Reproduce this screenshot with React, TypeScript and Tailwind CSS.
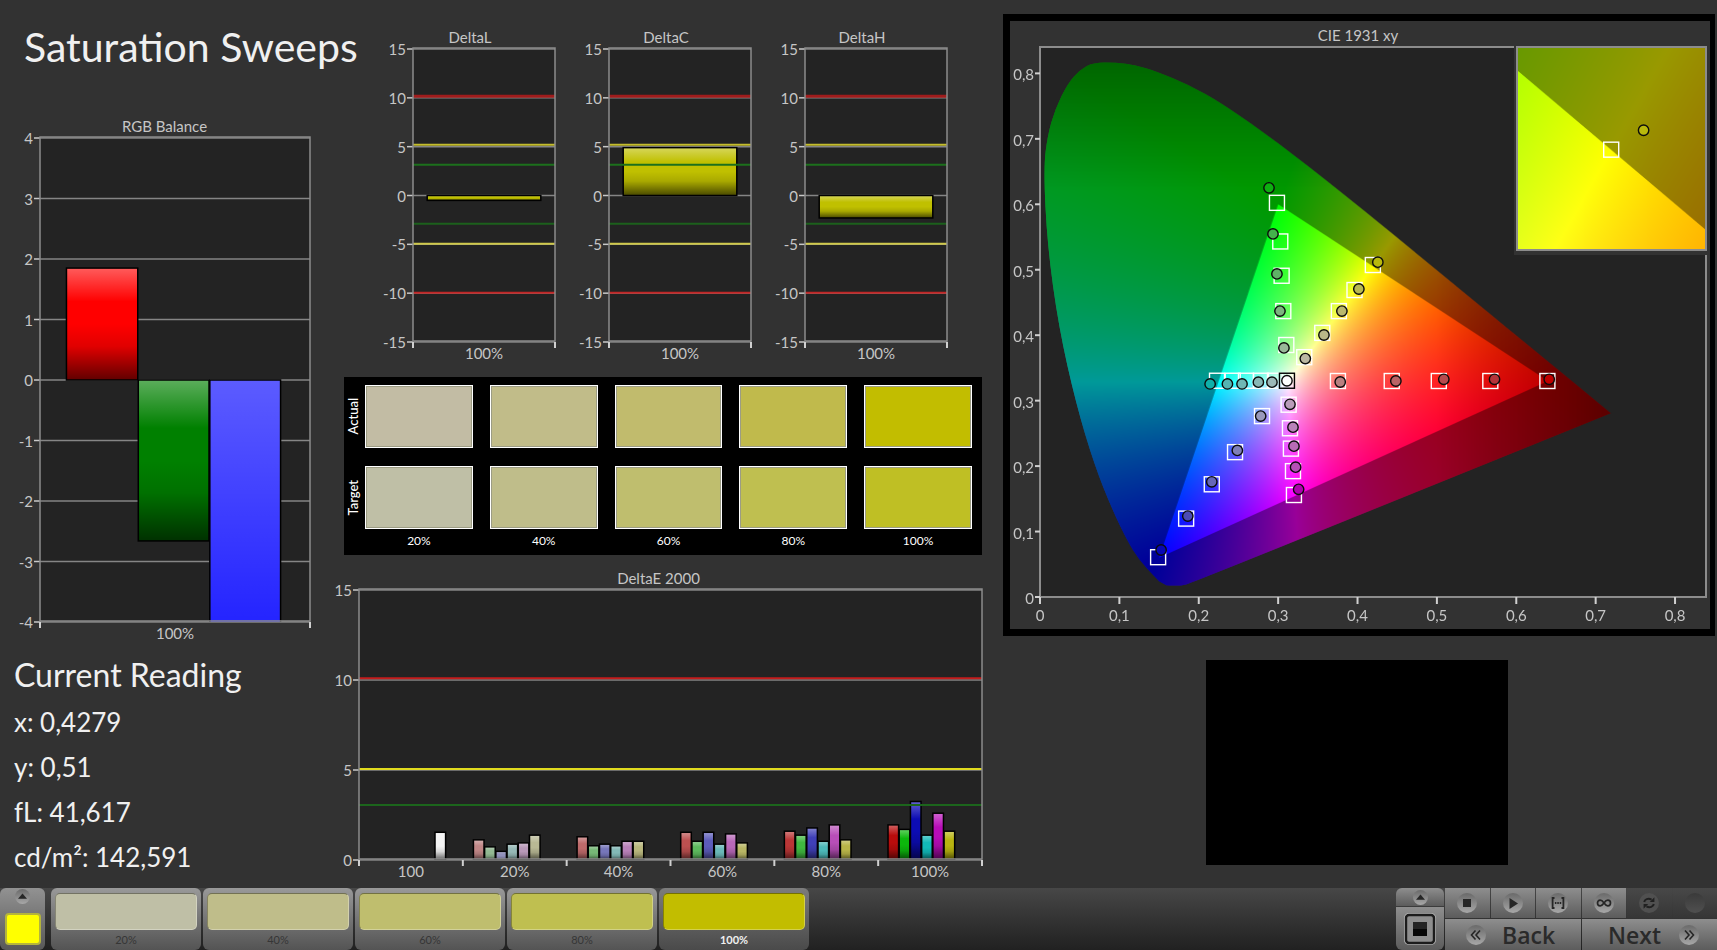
import { useEffect, useRef } from 'react';
import type { ReactNode } from 'react';

type Point = [number, number];
type Domain = { x0: number; x1: number; y0: number; y1: number };
type Bar = { left: number; width: number; value: number; color: string };
type Limit = { value: number; color: string; width: number };

const CIE_DOMAIN: Domain = { x0: 0, x1: 0.839, y0: 0, y1: 0.8403 };
const ZOOM_DOMAIN: Domain = { x0: 0.3937, x1: 0.4451, y0: 0.4797, y1: 0.5315 };

const LOCUS: Point[] = [
  [0.155, 0.0185], [0.145, 0.03], [0.1241, 0.0578], [0.1096, 0.0868], [0.0913, 0.1327],
  [0.0687, 0.2007], [0.0454, 0.295], [0.0235, 0.4127], [0.0092, 0.5384], [0.0045, 0.6548],
  [0.0095, 0.705], [0.0189, 0.745], [0.035, 0.785], [0.05, 0.805], [0.067, 0.8165],
  [0.096, 0.8165], [0.12, 0.813], [0.1468, 0.803], [0.1867, 0.783], [0.2296, 0.7543],
  [0.3016, 0.6923], [0.3731, 0.6245], [0.4441, 0.5547], [0.5125, 0.4866], [0.5752, 0.4242],
  [0.627, 0.3725], [0.6658, 0.334], [0.6915, 0.3083], [0.719, 0.2809], [0.19, 0.021],
  [0.178, 0.0175], [0.163, 0.0173],
];

const GAMUT: Point[] = [[0.64, 0.33], [0.3, 0.6], [0.15, 0.06]];

const TARGETS: Point[] = [
  [0.2985, 0.6022], [0.3027, 0.5432], [0.3044, 0.4908], [0.3065, 0.4368], [0.3103, 0.385],
  [0.4193, 0.5072], [0.3962, 0.469], [0.3765, 0.4368], [0.3556, 0.4035], [0.3329, 0.3664],
  [0.223, 0.3304], [0.2428, 0.3304], [0.2595, 0.3304], [0.2784, 0.3304], [0.296, 0.3304],
  [0.2797, 0.2764], [0.2457, 0.2213], [0.2164, 0.1722], [0.1841, 0.1198], [0.1488, 0.0608],
  [0.3132, 0.2938], [0.3149, 0.2578], [0.3161, 0.2267], [0.3187, 0.1923], [0.3199, 0.1558],
  [0.3753, 0.33], [0.4431, 0.33], [0.5024, 0.33], [0.5673, 0.33], [0.6392, 0.33],
];

const READINGS: [number, number, string][] = [
  [0.2885, 0.6251, '#0db010'], [0.2935, 0.5547, '#44b24c'], [0.2985, 0.4936, '#5fb266'],
  [0.3023, 0.4368, '#7cb47f'], [0.3073, 0.3806, '#99b999'], [0.4256, 0.5116, '#b9b90c'],
  [0.4017, 0.4706, '#b9b950'], [0.3803, 0.4368, '#bab86d'], [0.3577, 0.4003, '#bab788'],
  [0.3342, 0.3642, '#bbb8a2'], [0.2922, 0.3282, '#9cb8b8'], [0.2751, 0.3282, '#88b8b6'],
  [0.2545, 0.3255, '#6fb8b6'], [0.2361, 0.3255, '#55b5b3'], [0.2143, 0.3255, '#10b0aa'],
  [0.278, 0.2764, '#9999bb'], [0.2486, 0.224, '#7f7fb9'], [0.2164, 0.176, '#6666b8'],
  [0.1862, 0.1236, '#4b4bb5'], [0.1526, 0.0718, '#0808b4'], [0.3149, 0.2944, '#b99cb9'],
  [0.3187, 0.2595, '#b983b9'], [0.3199, 0.2305, '#b86bb6'], [0.322, 0.1984, '#b64fb6'],
  [0.3258, 0.1645, '#b000b0'], [0.3782, 0.3285, '#b98080'], [0.4483, 0.33, '#b96466'],
  [0.5087, 0.3326, '#b64b4e'], [0.5726, 0.3326, '#b4343a'], [0.6415, 0.3326, '#c00000'],
];

const SWATCHES = [
  { label: '20%', actual: '#c2bca4', target: '#bfbfa6' },
  { label: '40%', actual: '#c1bc89', target: '#bfbd8a' },
  { label: '60%', actual: '#c1bb6d', target: '#bfbe6e' },
  { label: '80%', actual: '#c0ba4c', target: '#bfbf50' },
  { label: '100%', actual: '#c2bd00', target: '#bfbf24' },
];

const DELTA_LIMITS: Limit[] = [
  { value: 10.15, color: '#a01c1c', width: 3 },
  { value: 5.2, color: '#c4bd2e', width: 2 },
  { value: 3.15, color: '#1c701c', width: 2 },
  { value: -2.9, color: '#1c601c', width: 2 },
  { value: -4.95, color: '#cfc84a', width: 2 },
  { value: -9.95, color: '#c02626', width: 2 },
];

const DELTA_E_LIMITS: Limit[] = [
  { value: 10.1, color: '#c41c1c', width: 2 },
  { value: 5.05, color: '#e0da1e', width: 2 },
  { value: 3.05, color: '#1c651c', width: 2 },
];

const SWEEPS = [
  { values: [1.12, 0.73, 0.48, 0.88, 0.95, 1.38], colors: ['#c08686', '#92b892', '#9090ba', '#96b8b6', '#b898b8', '#b8b894'] },
  { values: [1.29, 0.79, 0.88, 0.79, 1.04, 1.04], colors: ['#be6a6a', '#76b876', '#7676ba', '#82b8b6', '#b880b8', '#b8b67c'] },
  { values: [1.54, 1.04, 1.54, 0.88, 1.45, 0.95], colors: ['#bc5050', '#5cb85c', '#5c5cba', '#6ab8b8', '#b868b8', '#b8b664'] },
  { values: [1.6, 1.38, 1.78, 1.04, 1.95, 1.12], colors: ['#ba3636', '#40b840', '#4040b8', '#4cb8b8', '#b84eb8', '#b8b448'] },
  { values: [1.95, 1.7, 3.25, 1.38, 2.6, 1.6], colors: ['#b80c0c', '#0cb80c', '#0c0cb4', '#12b8b8', '#b80cb8', '#b8b410'] },
];

const DELTA_E_BARS: Bar[] = [
  { left: 12.2, width: 1.7, value: 1.54, color: '#f4f4f4' },
  ...SWEEPS.flatMap((s, i) =>
    s.values.map((value, j) => ({
      left: ((i + 1) * 100) / 6 + 1.7 - i * 0.03 + j * 1.8,
      width: 1.7,
      value,
      color: s.colors[j],
    })),
  ),
];

const pct = (n: number) => `${n}%`;

function mix([x, y]: Point): [number, number, number] {
  const z = 1 - x - y;
  const r = Math.max(0, 3.2406 * x - 1.5372 * y - 0.4986 * z);
  const g = Math.max(0, -0.9689 * x + 1.8758 * y + 0.0415 * z);
  const b = Math.max(0, 0.0557 * x - 0.204 * y + 1.057 * z);
  // the far red and far green ends of the locus fade out
  const fade = Math.min(1, 1 - (x - 0.5) * 1.85, 1 - (y - 0.62) * 1.7);
  const k = (255 * fade) / Math.max(r, g, b);
  return [r * k, g * k, b * k];
}

function Chromaticity({ domain, width, height }: { domain: Domain; width: number; height: number }) {
  const ref = useRef<HTMLCanvasElement>(null);

  useEffect(() => {
    const ctx = ref.current?.getContext('2d');
    if (!ctx) return;
    const { x0, x1, y0, y1 } = domain;
    const source = document.createElement('canvas');
    source.width = width;
    source.height = height;
    const sctx = source.getContext('2d')!;
    const image = sctx.createImageData(width, height);
    for (let py = 0; py < height; py++) {
      for (let px = 0; px < width; px++) {
        const rgb = mix([x0 + ((px + 0.5) / width) * (x1 - x0), y1 - ((py + 0.5) / height) * (y1 - y0)]);
        image.data.set([...rgb, 255], (py * width + px) * 4);
      }
    }
    sctx.putImageData(image, 0, 0);

    const toPx = ([x, y]: Point): Point => [((x - x0) / (x1 - x0)) * width, ((y1 - y) / (y1 - y0)) * height];
    const polygon = (points: Point[]) => {
      const path = new Path2D();
      points.forEach((p) => path.lineTo(...toPx(p)));
      path.closePath();
      return path;
    };

    // round off the locus by running curves through the segment midpoints
    const locus = new Path2D();
    LOCUS.forEach((p, i) => {
      const next = LOCUS[(i + 1) % LOCUS.length];
      const isTip = p[0] > 0.7;
      const [cx, cy] = toPx(p);
      const [mx, my] = toPx([(p[0] + next[0]) / 2, (p[1] + next[1]) / 2]);
      if (i === 0) locus.moveTo(mx, my);
      else if (isTip) {
        locus.lineTo(cx, cy);
        locus.lineTo(mx, my);
      } else locus.quadraticCurveTo(cx, cy, mx, my);
    });
    locus.closePath();

    ctx.clearRect(0, 0, width, height);
    ctx.save();
    ctx.clip(locus);
    ctx.drawImage(source, 0, 0);
    const shade = new Path2D();
    shade.rect(0, 0, width, height);
    shade.addPath(polygon(GAMUT));
    ctx.fillStyle = 'rgba(0,0,0,0.4)';
    ctx.fill(shade, 'evenodd');
    ctx.restore();
  }, [domain, width, height]);

  return <canvas ref={ref} width={width} height={height} className="block h-full w-full" />;
}

function Marker({ at, domain, children }: { at: Point; domain: Domain; children: ReactNode }) {
  const x = ((at[0] - domain.x0) / (domain.x1 - domain.x0)) * 100;
  const y = ((domain.y1 - at[1]) / (domain.y1 - domain.y0)) * 100;
  return (
    <svg x={pct(x)} y={pct(y)} overflow="visible">
      {children}
    </svg>
  );
}

function Target({ color = '#fff' }: { color?: string }) {
  return <rect x="-7.5" y="-7.5" width="15" height="15" fill="none" stroke={color} strokeWidth="1.4" />;
}

function Reading({ color }: { color: string }) {
  return <circle r="5.2" fill={color} stroke="#0c0c0c" strokeWidth="1.4" />;
}

type ChartProps = {
  title: string;
  ticks: number[];
  bars: Bar[];
  limits?: Limit[];
  categories: string[];
  gutter: string;
};

function BarChart({ title, ticks, bars, limits = [], categories, gutter }: ChartProps) {
  const max = ticks[0];
  const min = ticks[ticks.length - 1];
  const at = (v: number) => ((max - v) / (max - min)) * 100;

  return (
    <figure className="flex h-full min-w-0 flex-1 flex-col">
      <figcaption className="h-5 text-center text-[15px] leading-5 text-[#c6c6c6]">{title}</figcaption>
      <div className={`min-h-0 flex-1 pb-7 ${gutter}`}>
        <svg width="100%" height="100%" className="overflow-visible">
          <rect width="100%" height="100%" fill="#232323" />
          {ticks.map((t) => (
            <g key={t}>
              <line x1="0" x2="100%" y1={pct(at(t))} y2={pct(at(t))} stroke="#858585" strokeWidth="1.5" />
              <line x1="-6" x2="0" y1={pct(at(t))} y2={pct(at(t))} stroke="#c8c8c8" strokeWidth="1.5" />
              <text x="-7" y={pct(at(t))} dy="6" textAnchor="end" fontSize="15" fill="#c6c6c6">
                {t}
              </text>
            </g>
          ))}
          <svg width="100%" height="100%">
            {bars.map((b) => {
              const top = at(Math.max(b.value, 0));
              const box = {
                x: pct(b.left),
                y: pct(top),
                width: pct(b.width),
                height: pct(at(Math.min(b.value, 0)) - top),
              };
              return (
                <g key={b.left}>
                  <rect {...box} fill={b.color} />
                  <rect {...box} fill="url(#gloss)" stroke="#000" strokeWidth="1.5" />
                </g>
              );
            })}
          </svg>
          {limits.map((l) => (
            <line
              key={l.value}
              x1="0"
              x2="100%"
              y1={pct(at(l.value))}
              y2={pct(at(l.value))}
              stroke={l.color}
              strokeWidth={l.width}
            />
          ))}
          <rect y="-1" width="100%" height="100%" fill="none" stroke="#8c8c8c" strokeWidth="1.5" />
          {[...categories, ''].map((c, i) => {
            const x = (i / categories.length) * 100;
            return (
              <g key={i}>
                <svg x={pct(x)} y="100%" overflow="visible">
                  <line y2="6" stroke="#d0d0d0" strokeWidth="2" />
                </svg>
                <text x={pct(x + 50 / categories.length)} y="100%" dy="17" textAnchor="middle" fontSize="15" fill="#c6c6c6">
                  {c}
                </text>
              </g>
            );
          })}
        </svg>
      </div>
    </figure>
  );
}

function CieChart() {
  const steps = [0, 1, 2, 3, 4, 5, 6, 7, 8];
  const label = (n: number) => (n ? `0,${n}` : '0');
  return (
    <figure className="flex min-h-0 flex-1 flex-col border-[7px] border-r-[5px] border-black pt-1 pr-1 pb-8 pl-[30px]">
      <figcaption className="mb-[2px] -ml-[30px] h-5 text-center text-[15px] leading-5 text-[#c6c6c6]">
        CIE 1931 xy
      </figcaption>
      <div className="relative min-h-0 flex-1 bg-[#232323]">
        <div className="absolute inset-0">
          <Chromaticity domain={CIE_DOMAIN} width={667} height={550} />
        </div>
        <svg width="100%" height="100%" className="absolute inset-0 overflow-visible">
          <rect width="100%" height="100%" fill="none" stroke="#8c8c8c" strokeWidth="2" />
          {steps.map((n) => {
            const x = pct((n * 10) / CIE_DOMAIN.x1);
            const y = pct(100 - (n * 10) / CIE_DOMAIN.y1);
            return (
              <g key={n} stroke="#d0d0d0" strokeWidth="2">
                <svg x={x} y="100%" overflow="visible">
                  <line y2="7" />
                </svg>
                <line x1="-5" x2="0" y1={y} y2={y} />
                <text x={x} y="100%" dy="24" textAnchor="middle" fontSize="15" fill="#c6c6c6" stroke="none">
                  {label(n)}
                </text>
                <text x="-6" y={y} dy="7" textAnchor="end" fontSize="15" fill="#c6c6c6" stroke="none">
                  {label(n)}
                </text>
              </g>
            );
          })}
          {TARGETS.map((p) => (
            <Marker key={p.join()} at={p} domain={CIE_DOMAIN}>
              <Target />
            </Marker>
          ))}
          {READINGS.map(([x, y, color]) => (
            <Marker key={`${x},${y}`} at={[x, y]} domain={CIE_DOMAIN}>
              <Reading color={color} />
            </Marker>
          ))}
          <Marker at={[0.3111, 0.3304]} domain={CIE_DOMAIN}>
            <Target color="#000" />
            <Reading color="#fff" />
          </Marker>
        </svg>
        <div className="absolute -top-px -right-px h-[38%] w-[29%] border-b-4 border-l-2 border-[#323232]">
          <div className="relative h-full w-full border-2 border-[#8c8c8c]">
            <Chromaticity domain={ZOOM_DOMAIN} width={190} height={201} />
            <svg width="100%" height="100%" className="absolute inset-0">
              <Marker at={[0.4193, 0.5053]} domain={ZOOM_DOMAIN}>
                <Target />
              </Marker>
              <Marker at={[0.4282, 0.5103]} domain={ZOOM_DOMAIN}>
                <Reading color="#b9b90c" />
              </Marker>
            </svg>
          </div>
        </div>
      </div>
    </figure>
  );
}

function SwatchPanel() {
  return (
    <div className="ml-[9px] flex h-[178px] bg-black pt-2 pr-[10px] text-white">
      <div className="flex w-[21px] flex-col items-center gap-[18px] pr-1">
        {['Actual', 'Target'].map((row) => (
          <div key={row} className="flex h-[63px] items-center">
            <span className="rotate-180 text-[13px] leading-4 font-medium [writing-mode:vertical-rl]">{row}</span>
          </div>
        ))}
      </div>
      <div className="grid flex-1 grid-cols-5 gap-x-[17px]">
        {SWATCHES.map((s) => (
          <div key={s.label} className="flex flex-col text-center text-xs leading-4">
            <div
              className="h-[63px] border border-white outline-1 -outline-offset-2 outline-[#9c9c84]"
              style={{ backgroundColor: s.actual }}
            />
            <div
              className="mt-[18px] mb-1 h-[63px] border border-white outline-1 -outline-offset-2 outline-[#9c9c84]"
              style={{ backgroundColor: s.target }}
            />
            {s.label}
          </div>
        ))}
      </div>
    </div>
  );
}

function Knob({ children, className = 'size-5' }: { children?: ReactNode; className?: string }) {
  return (
    <span className={`flex items-center justify-center rounded-full bg-linear-to-b from-[#6a6a6a] to-[#a8a8a8] ${className}`}>
      <svg viewBox="0 0 20 20" className="h-full w-full" fill="#262626">
        {children}
      </svg>
    </span>
  );
}

const TRANSPORT = [
  { label: 'Stop', icon: <rect x="6" y="6" width="8" height="8" /> },
  { label: 'Play', icon: <path d="M6.5 5 L15 10.5 L6.5 16 Z" /> },
  {
    label: 'Range',
    icon: (
      <path
        d="M6.5 5 H4.6 V15 H6.5 M13.5 5 H15.4 V15 H13.5 M6.9 10 H8.4 M9.3 10 H10.8 M11.7 10 H13.2"
        fill="none"
        stroke="#262626"
        strokeWidth="1.8"
      />
    ),
  },
  {
    label: 'Loop',
    icon: (
      <path
        d="M10 10 C8.6 8 7.6 7.2 6.2 7.2 C2.6 7.2 2.6 12.8 6.2 12.8 C7.6 12.8 8.6 12 10 10 C11.4 8 12.4 7.2 13.8 7.2 C17.4 7.2 17.4 12.8 13.8 12.8 C12.4 12.8 11.4 12 10 10 Z"
        fill="none"
        stroke="#262626"
        strokeWidth="1.7"
      />
    ),
  },
];

const GREY = 'bg-linear-to-b from-[#8e8e8e] to-[#5c5c5c]';

function Footer() {
  return (
    <footer className="flex h-[62px] bg-linear-to-b from-[#474747] to-[#212121]">
      <button aria-label="Current color" className="flex w-[45px] flex-col items-center rounded-md bg-linear-to-b from-[#929292] to-[#585858] pt-px">
        <Knob className="size-[15px]">
          <path d="M4 13 L10 6 L16 13 Z" />
        </Knob>
        <span className="mt-[9px] h-8 w-9 rounded-[4px] border-2 border-[#b4b43c] bg-[#ffff00]" />
      </button>
      <div className="ml-[6px] flex gap-[2px]">
        {SWATCHES.map((s, i) => (
          <button
            key={s.label}
            className={
              i === 4
                ? 'flex w-[150px] flex-col items-center rounded-md bg-linear-to-b from-[#7c7c7c] to-[#4a4a4a] px-1 pt-[5px] text-[11px] leading-4 font-bold text-[#f0f0f0]'
                : 'flex w-[150px] flex-col items-center rounded-md bg-linear-to-b from-[#999999] to-[#545454] px-1 pt-[5px] text-[11px] leading-4 text-[#363636]'
            }
          >
            <span
              className="mb-[2px] h-[37px] w-[142px] rounded-[5px] border border-t-black/40 border-r-white/30 border-b-white/30 border-l-black/30"
              style={{ backgroundColor: i === 4 ? s.actual : s.target }}
            />
            {s.label}
          </button>
        ))}
      </div>
      <div className="ml-auto flex gap-px">
        <div className="flex w-12 flex-col gap-px">
          <button aria-label="Expand" className={`flex h-[18px] items-center justify-center rounded-t-md ${GREY}`}>
            <Knob className="size-[15px]">
              <path d="M4 13 L10 6 L16 13 Z" />
            </Knob>
          </button>
          <button aria-label="Pattern window" className={`flex flex-1 items-center justify-center rounded-b-md ${GREY}`}>
            <svg viewBox="0 0 34 34" className="size-[34px]">
              <rect x="1" y="1" width="32" height="32" rx="5" fill="#b4b4b4" />
              <rect x="3" y="3" width="28" height="28" rx="3" fill="#8e8e8e" stroke="#1c1c1c" strokeWidth="2.4" />
              <rect x="10" y="10" width="14" height="14" fill="#060606" />
              <rect x="10" y="10" width="14" height="7" fill="#242424" />
            </svg>
          </button>
        </div>
        <div className="flex w-[272px] flex-col gap-px">
          <div className="grid h-[30px] grid-cols-6 gap-px">
            {TRANSPORT.map((t) => (
              <button key={t.label} aria-label={t.label} className={`flex items-center justify-center ${GREY}`}>
                <Knob>{t.icon}</Knob>
              </button>
            ))}
            <button aria-label="Refresh" className="flex items-center justify-center bg-linear-to-b from-[#484848] to-[#363636]">
              <span className="size-5 rounded-full bg-[#505050]">
                <svg viewBox="0 0 20 20" className="size-5" fill="none" stroke="#202020" strokeWidth="2">
                  <path d="M5.2 9 C5.6 6.4 9 4.8 12.6 6.6 M14.8 11 C14.4 13.6 11 15.2 7.4 13.4" />
                  <path d="M15.4 4.2 V9 H10.8 Z M4.6 15.8 V11 H9.2 Z" fill="#202020" stroke="none" />
                </svg>
              </span>
            </button>
            <button aria-label="Record" className="flex items-center justify-center bg-linear-to-b from-[#484848] to-[#363636]">
              <span className="size-5 rounded-full bg-linear-to-b from-[#3a3a3a] to-[#505050]" />
            </button>
          </div>
          <div className="grid flex-1 grid-cols-2 gap-px font-['Open_Sans',sans-serif] text-[23px] leading-[30px] font-semibold text-[#2a2a2a]">
            <button className={`flex items-center gap-4 pl-[21px] ${GREY}`}>
              <Knob>
                <path d="M9.5 5.5 L5.5 10 L9.5 14.5 M14 5.5 L10 10 L14 14.5" fill="none" stroke="#262626" strokeWidth="1.6" />
              </Knob>
              Back
            </button>
            <button className={`flex items-center justify-end gap-[18px] pr-[18px] ${GREY}`}>
              Next
              <Knob>
                <path d="M6 5.5 L10 10 L6 14.5 M10.5 5.5 L14.5 10 L10.5 14.5" fill="none" stroke="#262626" strokeWidth="1.6" />
              </Knob>
            </button>
          </div>
        </div>
      </div>
    </footer>
  );
}

export default function App() {
  return (
    <div className="flex h-screen flex-col bg-[#323232] font-['Lato','Open_Sans',sans-serif]">
      <svg className="absolute size-0">
        <linearGradient id="gloss" x1="0" x2="0" y1="0" y2="1">
          <stop offset="0" stopColor="#fff" stopOpacity="0.36" />
          <stop offset="0.3" stopColor="#fff" stopOpacity="0" />
          <stop offset="0.5" stopColor="#000" stopOpacity="0" />
          <stop offset="0.7" stopColor="#000" stopOpacity="0.12" />
          <stop offset="1" stopColor="#000" stopOpacity="0.62" />
        </linearGradient>
      </svg>
      <main className="grid min-h-0 flex-1 grid-cols-[minmax(0,335fr)_minmax(0,668fr)_minmax(0,714fr)]">
        <section className="flex min-h-0 flex-col">
          <h1 className="pt-[19px] pb-px pl-6 text-[41px] leading-[56px] whitespace-nowrap text-[#f0f0f0]">
            Saturation Sweeps
          </h1>
          <div className="mt-10 min-h-0 flex-1 pr-[25px] pl-[19px]">
            <BarChart
              title="RGB Balance"
              ticks={[4, 3, 2, 1, 0, -1, -2, -3, -4]}
              categories={['100%']}
              gutter="pl-[21px] pt-[2px]"
              bars={[
                { left: 9.8, width: 26.4, value: 1.85, color: '#ff0000' },
                { left: 36.4, width: 26.2, value: -2.66, color: '#008000' },
                { left: 62.9, width: 26.2, value: -22, color: '#0000ff' },
              ]}
            />
          </div>
          <div className="h-[238px] pl-[14px] text-[26px] leading-[45px] text-[#f0f0f0]">
            <h2 className="text-[32px] leading-[50px]">Current Reading</h2>
            <p>x: 0,4279</p>
            <p>y: 0,51</p>
            <p>fL: 41,617</p>
            <p>cd/m²: 142,591</p>
          </div>
        </section>

        <section className="flex min-h-0 flex-col pr-[21px]">
          <div className="flex h-[370px] gap-[26px] pt-[27px] pr-[35px] pl-[50px]">
            {[
              { title: 'DeltaL', value: -0.5 },
              { title: 'DeltaC', value: 4.9 },
              { title: 'DeltaH', value: -2.3 },
            ].map((c) => (
              <BarChart
                key={c.title}
                title={c.title}
                ticks={[15, 10, 5, 0, -5, -10, -15]}
                categories={['100%']}
                gutter="pl-7 pt-[2px]"
                limits={DELTA_LIMITS}
                bars={[{ left: 10, width: 80, value: c.value, color: '#c0c000' }]}
              />
            ))}
          </div>
          <div className="mt-[7px]">
            <SwatchPanel />
          </div>
          <div className="mt-[13px] min-h-0 flex-1">
            <BarChart
              title="DeltaE 2000"
              ticks={[15, 10, 5, 0]}
              categories={['100', '20%', '40%', '60%', '80%', '100%']}
              gutter="pl-6 pt-[2px]"
              limits={DELTA_E_LIMITS}
              bars={DELTA_E_BARS}
            />
          </div>
        </section>

        <section className="flex min-h-0 flex-col pt-[14px] pr-[2px]">
          <CieChart />
          <div className="mt-6 mb-[23px] ml-[203px] h-[205px] w-[302px] bg-black" />
        </section>
      </main>
      <Footer />
    </div>
  );
}
